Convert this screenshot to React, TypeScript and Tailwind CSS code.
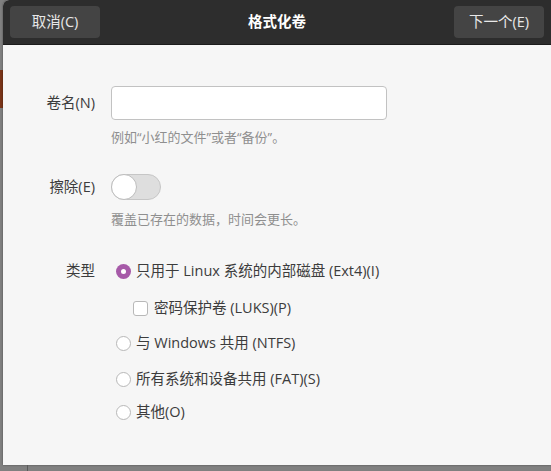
import React from 'react';

const font = { fontFamily: '"Open Sans", "Noto Sans CJK SC", sans-serif' };

const Radio: React.FC<{ checked?: boolean; label: string }> = ({ checked = false, label }) => (
  <div className="flex items-center h-[20px]">
    {checked ? (
      <span className="w-[15px] h-[15px] rounded-full bg-[#a65aa8] flex items-center justify-center">
        <span className="w-[5px] h-[5px] rounded-full bg-white" />
      </span>
    ) : (
      <span className="w-[15px] h-[15px] rounded-full border border-[#b8b8b8] bg-white" />
    )}
    <span className="ml-[5px] text-[14.5px] text-[#3c3c3c]">{label}</span>
  </div>
);

export default function App() {
  return (
    <div className="w-[551px] h-[471px] bg-[#808080] flex overflow-hidden" style={font}>
      <div className="w-[3px] shrink-0 flex flex-col">
        <div className="h-[70px]" />
        <div className="h-[38px] bg-[#7a3418]" />
      </div>
      <div className="flex-1 flex flex-col">
        <div className="h-[465px] flex flex-col bg-[#f6f6f6] rounded-tl-[6px] overflow-hidden shadow-[0_0_2px_rgba(0,0,0,0.5)]">
          <div className="h-[45px] bg-[#2d2d2d] border-b border-[#1c1c1c] flex items-center justify-between px-[7px]">
            <button className="w-[90px] h-[32px] rounded-[4px] bg-[#444444] text-[#e8e8e8] text-[14.5px]">取消(C)</button>
            <div className="text-white font-bold text-[14.5px]">格式化卷</div>
            <button className="w-[90px] h-[32px] rounded-[4px] bg-[#444444] text-[#e8e8e8] text-[14.5px]">下一个(E)</button>
          </div>
          <div className="flex flex-col pt-[41px]">
            <div className="grid grid-cols-[92px_1fr] gap-x-[16px] items-center">
              <div className="text-right text-[14.5px] text-[#3c3c3c]">卷名(N)</div>
              <div className="w-[276px] h-[34px] bg-white border border-[#c2c2c2] rounded-[4px]" />
            </div>
            <div className="ml-[108px] mt-[8px] text-[13px] text-[#8f8f8f]">例如“小红的文件”或者“备份”。</div>

            <div className="grid grid-cols-[92px_1fr] gap-x-[16px] items-center mt-[26px]">
              <div className="text-right text-[14.5px] text-[#3c3c3c]">擦除(E)</div>
              <div className="w-[50px] h-[26px] rounded-full bg-[#dedede] border border-[#c6c6c6] relative">
                <span className="absolute left-[-1px] top-[-1px] w-[26px] h-[26px] rounded-full bg-white border border-[#bdbdbd]" />
              </div>
            </div>
            <div className="ml-[108px] mt-[10px] text-[13px] text-[#8f8f8f]">覆盖已存在的数据，时间会更长。</div>

            <div className="grid grid-cols-[92px_1fr] gap-x-[21px] items-start mt-[32px]">
              <div className="text-right text-[14.5px] text-[#3c3c3c] h-[20px] leading-[20px]">类型</div>
              <div className="flex flex-col">
                <Radio checked label="只用于 Linux 系统的内部磁盘 (Ext4)(I)" />
                <div className="flex items-center h-[20px] ml-[17px] mt-[17px]">
                  <span className="w-[15px] h-[15px] rounded-[3px] border border-[#b8b8b8] bg-white" />
                  <span className="ml-[6px] text-[14.5px] text-[#3c3c3c]">密码保护卷 (LUKS)(P)</span>
                </div>
                <div className="mt-[15px]"><Radio label="与 Windows 共用 (NTFS)" /></div>
                <div className="mt-[16px]"><Radio label="所有系统和设备共用 (FAT)(S)" /></div>
                <div className="mt-[13px]"><Radio label="其他(O)" /></div>
              </div>
            </div>
          </div>
        </div>
        <div className="flex-1 flex">
          <div className="w-[25px] border-r border-[#5a5a5a]" />
        </div>
      </div>
    </div>
  );
}
